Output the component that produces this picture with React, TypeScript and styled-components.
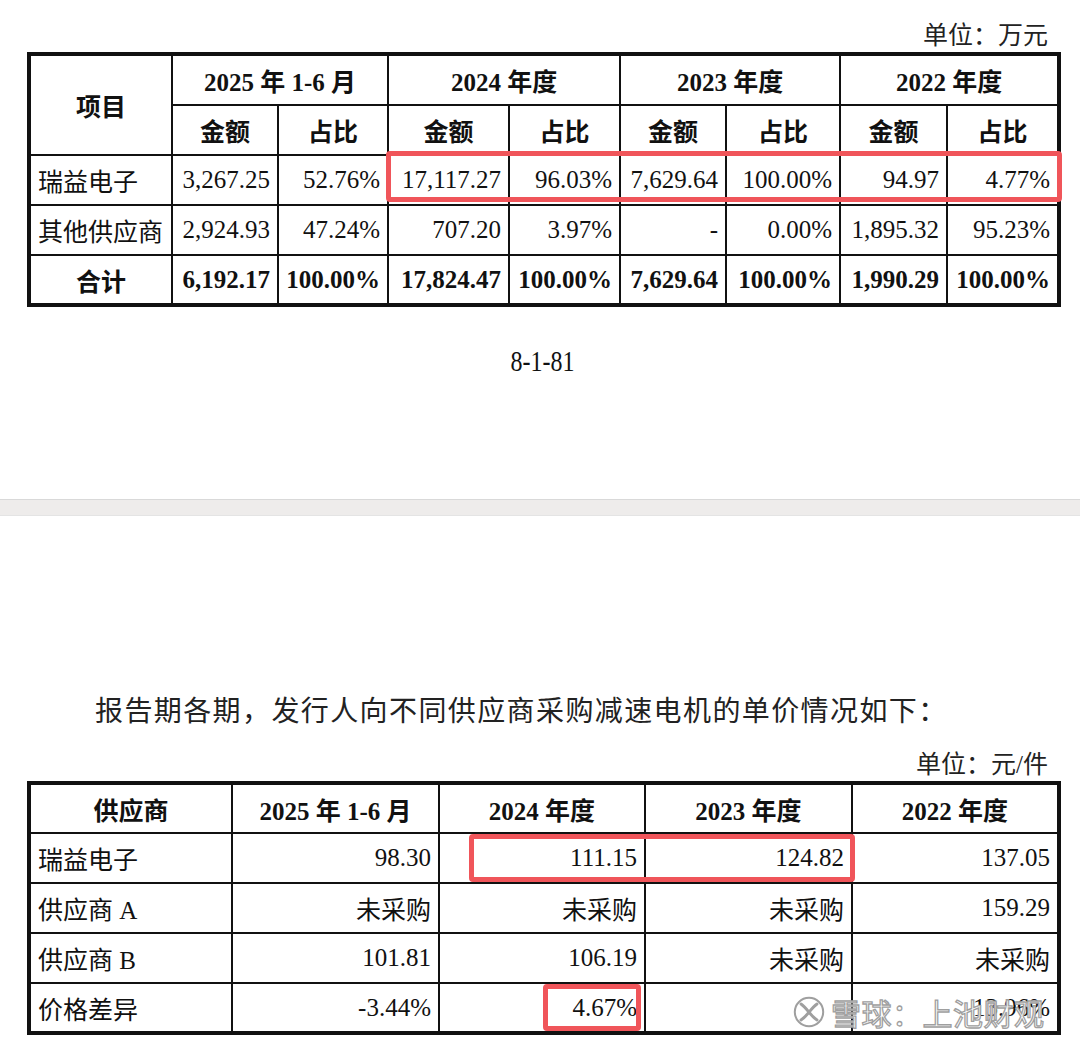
import React from 'react';
import styled, { createGlobalStyle } from 'styled-components';

const GlobalStyle = createGlobalStyle`
  html, body {
    margin: 0;
    padding: 0;
    background: #fff;
  }
  body {
    font-family: "Liberation Serif", "Noto Sans CJK SC", serif;
    color: #111;
  }
`;

const Sheet = styled.section`
  width: 1031px;
  padding: 20px 22px 0 27px;
`;

const UnitLabel = styled.div<{ $gapTop?: number }>`
  margin-top: ${p => p.$gapTop || 0}px;
  height: 32px;
  line-height: 32px;
  padding-right: 10px;
  text-align: right;
  font-size: 25px;
  color: #222;
`;

const TableWrap = styled.div`
  position: relative;
`;

const Table = styled.table`
  width: 1031px;
  border-collapse: collapse;
  table-layout: fixed;
  border: 4px solid #111;
  font-size: 25px;
`;

const Row = styled.tr`
  height: 50px;
`;

const Cell = styled.td<{ $align?: 'left' | 'right' | 'center'; $bold?: boolean }>`
  border: 2px solid #111;
  padding: 0 7px;
  text-align: ${p => p.$align || 'right'};
  font-weight: ${p => (p.$bold ? 700 : 400)};
  white-space: nowrap;
  overflow: hidden;
  color: #111;
`;

const Highlight = styled.div`
  position: absolute;
  box-sizing: border-box;
  border: 5px solid #f0555a;
  border-radius: 4px;
  pointer-events: none;
`;

const PageNumber = styled.div`
  margin-top: 38px;
  height: 32px;
  line-height: 32px;
  text-align: center;
  font-size: 30px;
  transform: scaleX(0.8);
  color: #111;
`;

const PageBreak = styled.div`
  margin-top: 122px;
  height: 15px;
  background: #eeeceb;
  border-top: 1px solid #d9d9d9;
  border-bottom: 1px solid #e4e4e4;
`;

const Paragraph = styled.p`
  margin: 176px 0 0 68px;
  height: 40px;
  line-height: 40px;
  font-size: 28px;
  letter-spacing: 1.4px;
  color: #222;
`;

const Watermark = styled.div`
  position: absolute;
  left: 766px;
  top: 209px;
  width: max-content;
  display: flex;
  align-items: center;
  gap: 6px;
  white-space: nowrap;
  pointer-events: none;

  svg {
    flex-shrink: 0;
  }
`;

const WatermarkText = styled.span`
  font-family: "Noto Sans CJK SC", "Noto Sans", sans-serif;
  font-size: 30px;
  letter-spacing: 0.5px;
  color: rgba(255, 255, 255, 0.94);
  -webkit-text-stroke: 1.3px #9f9f9f;
`;

type Col = number[];

const topCols: Col = [143, 106, 110, 121, 111, 106, 114, 107, 112];
const priceCols: Col = [203, 207, 206, 207, 207];

const topRows = [
  { name: '瑞益电子', values: ['3,267.25', '52.76%', '17,117.27', '96.03%', '7,629.64', '100.00%', '94.97', '4.77%'] },
  { name: '其他供应商', values: ['2,924.93', '47.24%', '707.20', '3.97%', '-', '0.00%', '1,895.32', '95.23%'] },
];

const topTotal = ['6,192.17', '100.00%', '17,824.47', '100.00%', '7,629.64', '100.00%', '1,990.29', '100.00%'];

const periods = ['2025 年 1-6 月', '2024 年度', '2023 年度', '2022 年度'];

const priceRows = [
  { name: '瑞益电子', values: ['98.30', '111.15', '124.82', '137.05'] },
  { name: '供应商 A', values: ['未采购', '未采购', '未采购', '159.29'] },
  { name: '供应商 B', values: ['101.81', '106.19', '未采购', '未采购'] },
  { name: '价格差异', values: ['-3.44%', '4.67%', '-', '-13.96%'] },
];

const XueqiuLogo = () => (
  <svg width="32" height="32" viewBox="0 0 32 32">
    <circle cx="16" cy="16" r="14.2" fill="rgba(255,255,255,0.92)" stroke="#9f9f9f" strokeWidth="2" />
    <path d="M8 8 C14 12 17.5 20 24 24" fill="none" stroke="#9f9f9f" strokeWidth="3" strokeLinecap="round" />
    <path d="M24 8 C18 12 14.5 20 8 24" fill="none" stroke="#9f9f9f" strokeWidth="3" strokeLinecap="round" />
  </svg>
);

const App: React.FC = () => {
  return (
    <>
      <GlobalStyle />
      <Sheet>
        <UnitLabel>单位：万元</UnitLabel>
        <TableWrap>
          <Table>
            <colgroup>
              {topCols.map((w, i) => (
                <col key={i} style={{ width: w }} />
              ))}
            </colgroup>
            <tbody>
              <Row style={{ height: 51 }}>
                <Cell as="th" rowSpan={2} $align="center" $bold>项目</Cell>
                {periods.map(p => (
                  <Cell as="th" key={p} colSpan={2} $align="center" $bold>{p}</Cell>
                ))}
              </Row>
              <Row>
                {periods.map(p => (
                  <React.Fragment key={p}>
                    <Cell as="th" $align="center" $bold>金额</Cell>
                    <Cell as="th" $align="center" $bold>占比</Cell>
                  </React.Fragment>
                ))}
              </Row>
              {topRows.map(r => (
                <Row key={r.name}>
                  <Cell $align="left">{r.name}</Cell>
                  {r.values.map((v, i) => (
                    <Cell key={i}>{v}</Cell>
                  ))}
                </Row>
              ))}
              <Row>
                <Cell $align="center" $bold>合计</Cell>
                {topTotal.map((v, i) => (
                  <Cell key={i} $bold>{v}</Cell>
                ))}
              </Row>
            </tbody>
          </Table>
          <Highlight style={{ left: 359, top: 99, width: 676, height: 51 }} />
        </TableWrap>

        <PageNumber>8-1-81</PageNumber>
      </Sheet>

      <PageBreak />

      <Sheet style={{ paddingTop: 0 }}>
        <Paragraph>报告期各期，发行人向不同供应商采购减速电机的单价情况如下：</Paragraph>
        <UnitLabel $gapTop={17}>单位：元/件</UnitLabel>
        <TableWrap>
          <Table>
            <colgroup>
              {priceCols.map((w, i) => (
                <col key={i} style={{ width: w }} />
              ))}
            </colgroup>
            <tbody>
              <Row>
                <Cell as="th" $align="center" $bold>供应商</Cell>
                {periods.map(p => (
                  <Cell as="th" key={p} $align="center" $bold>{p}</Cell>
                ))}
              </Row>
              {priceRows.map(r => (
                <Row key={r.name}>
                  <Cell $align="left">{r.name}</Cell>
                  {r.values.map((v, i) => (
                    <Cell key={i}>{v}</Cell>
                  ))}
                </Row>
              ))}
            </tbody>
          </Table>
          <Highlight style={{ left: 442, top: 53, width: 386, height: 48 }} />
          <Highlight style={{ left: 516, top: 203, width: 98, height: 47 }} />
          <Watermark>
            <XueqiuLogo />
            <WatermarkText>雪球：上池财观</WatermarkText>
          </Watermark>
        </TableWrap>
      </Sheet>
    </>
  );
};

export default App;
